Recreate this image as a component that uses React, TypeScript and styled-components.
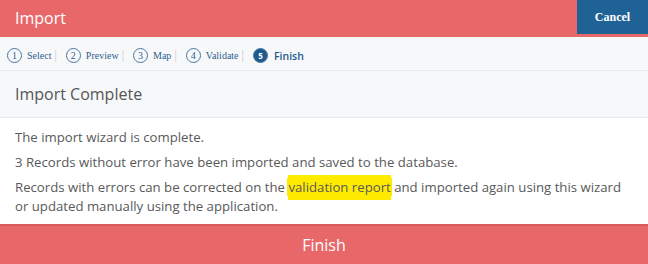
import React from 'react';
import styled, { createGlobalStyle } from 'styled-components';

const GlobalStyle = createGlobalStyle`
  html, body {
    margin: 0;
    padding: 0;
    background: #ffffff;
  }
  body {
    width: 648px;
    height: 264px;
    overflow: hidden;
  }
`;

const Dialog = styled.div`
  width: 648px;
  height: 264px;
  display: flex;
  flex-direction: column;
  font-family: 'Open Sans', 'Liberation Sans', sans-serif;
`;

const TitleBar = styled.header`
  height: 37px;
  background: #e8686a;
  display: flex;
  align-items: flex-start;
  justify-content: space-between;
`;

const Title = styled.h1`
  margin: 0;
  padding: 7px 0 0 15px;
  font-size: 16px;
  font-weight: 400;
  color: #ffffff;
`;

const CancelButton = styled.button`
  width: 71px;
  height: 34px;
  border: none;
  background: #1f6396;
  color: #ffffff;
  font-family: 'Liberation Serif', serif;
  font-size: 12px;
  font-weight: 700;
  padding: 0;
  cursor: pointer;
`;

const StepBar = styled.nav`
  height: 33px;
  box-sizing: border-box;
  padding: 4px 0 0 7px;
  background: #f7f8fa;
  display: flex;
  align-items: center;
`;

const Step = styled.div<{ $active?: boolean }>`
  display: flex;
  align-items: center;
  gap: ${(p) => (p.$active ? '6px' : '5px')};
  font-family: ${(p) => (p.$active ? "'Open Sans', sans-serif" : "'Liberation Serif', serif")};
  font-size: ${(p) => (p.$active ? '10.5px' : '10px')};
  font-weight: ${(p) => (p.$active ? 600 : 400)};
  color: ${(p) => (p.$active ? '#1f5a8c' : '#2e5f8d')};
`;

const StepNum = styled.span<{ $active?: boolean }>`
  width: 15px;
  height: 15px;
  box-sizing: border-box;
  border-radius: 50%;
  border: 1px solid #4a78a2;
  background: ${(p) => (p.$active ? '#1f5a8c' : 'transparent')};
  color: ${(p) => (p.$active ? '#ffffff' : '#2e5f8d')};
  display: flex;
  align-items: center;
  justify-content: center;
  font-family: ${(p) => (p.$active ? "'Open Sans', sans-serif" : "'Liberation Serif', serif")};
  font-size: ${(p) => (p.$active ? '8px' : '10px')};
  font-weight: ${(p) => (p.$active ? 700 : 400)};
`;

const Divider = styled.span`
  font-family: 'Liberation Serif', serif;
  font-size: 12px;
  color: #c5c9ce;
  margin: 0 9px 0 3px;
`;

const SectionHead = styled.div`
  height: 46px;
  background: #f7f8fa;
  border-top: 1px solid #e6e8eb;
  border-bottom: 1px solid #e6e8eb;
  display: flex;
  align-items: center;
  padding-left: 15px;
  font-size: 16px;
  color: #555555;
`;

const Body = styled.section`
  flex: 1;
  padding: 10px 15px 0;
  color: #595959;
  font-size: 13.2px;
  line-height: 19px;
`;

const Para = styled.p`
  margin: 0 0 6px;
`;

const Highlight = styled.span`
  background: #ffeb00;
  box-shadow: 0 -3px 0 #ffeb00, 0 4px 0 #ffeb00, 1px 0 0 #ffeb00, -1px 0 0 #ffeb00;
`;

const FinishBar = styled.button`
  height: 40px;
  border: none;
  border-top: 2px solid #d95a5c;
  background: #e8686a;
  color: #ffffff;
  font-family: 'Open Sans', sans-serif;
  font-size: 16px;
  padding: 0;
  cursor: pointer;
`;

const steps = ['Select', 'Preview', 'Map', 'Validate'];

const App: React.FC = () => {
  return (
    <Dialog>
      <GlobalStyle />
      <TitleBar>
        <Title>Import</Title>
        <CancelButton>Cancel</CancelButton>
      </TitleBar>
      <StepBar>
        {steps.map((s, i) => (
          <React.Fragment key={s}>
            <Step>
              <StepNum>{i + 1}</StepNum>
              {s}
            </Step>
            <Divider>|</Divider>
          </React.Fragment>
        ))}
        <Step $active>
          <StepNum $active>5</StepNum>
          Finish
        </Step>
      </StepBar>
      <SectionHead>Import Complete</SectionHead>
      <Body>
        <Para>The import wizard is complete.</Para>
        <Para>3 Records without error have been imported and saved to the database.</Para>
        <Para>
          Records with errors can be corrected on the <Highlight>validation report</Highlight> and
          imported again using this wizard or updated manually using the application.
        </Para>
      </Body>
      <FinishBar>Finish</FinishBar>
    </Dialog>
  );
};

export default App;
